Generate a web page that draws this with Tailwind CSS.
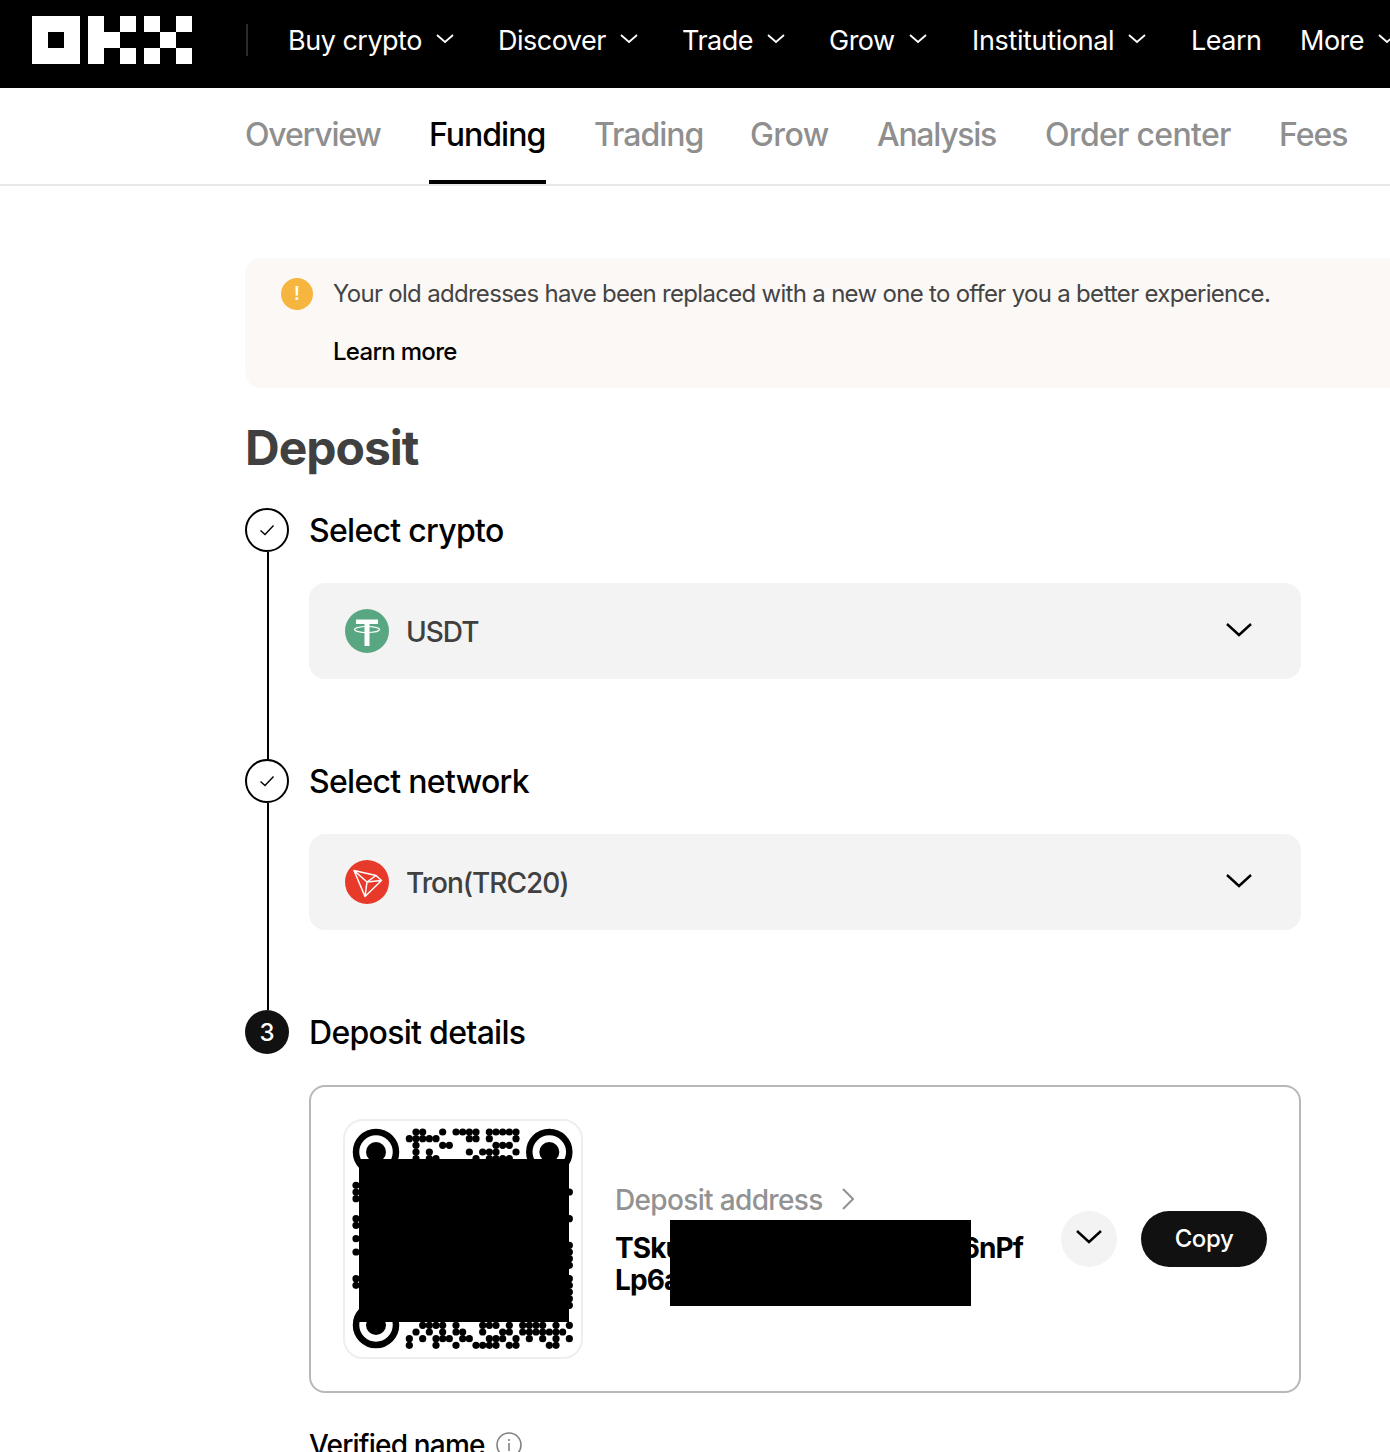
<!DOCTYPE html>
<html lang="en">

<head>
    <meta charset="UTF-8">
    <meta name="viewport" content="width=device-width, initial-scale=1.0">
    <title>Deposit</title>
    <script src="https://cdn.jsdelivr.net/npm/@tailwindcss/browser@4"></script>
</head>

<body class="bg-white font-['Inter',sans-serif] text-black">
    <div class="w-[1390px] h-[1452px] overflow-hidden relative">
        <!-- top nav -->
        <header class="h-[88px] bg-black flex items-center pl-8 pb-2 text-white text-[27px] tracking-[-0.5px] whitespace-nowrap">
            <svg class="w-[160px] h-12 shrink-0" viewBox="0 0 160 48" fill="#fff">
                <path fill-rule="evenodd" d="M0 0h48v48H0zM16 16v16h16V16z" />
                <path d="M56 0h16v48H56zM72 16h16v16H72zM88 0h16v16H88zM88 32h16v16H88z" />
                <path d="M112 0h16v16h-16zM144 0h16v16h-16zM128 16h16v16h-16zM112 32h16v16h-16zM144 32h16v16h-16z" />
            </svg>
            <div class="w-0.5 h-8 bg-[#2b2b2b] ml-[54px] mr-10 shrink-0"></div>
            <nav class="flex items-center translate-y-px">
                <a class="flex items-center gap-[14px] w-[210px]">Buy crypto
                    <svg class="w-[18px] h-[10px] -translate-y-0.5" viewBox="0 0 18 10" fill="none" stroke="#fff" stroke-width="1.8"><path d="M1 1l8 7 8-7" /></svg>
                </a>
                <a class="flex items-center gap-[14px] w-[184px]">Discover
                    <svg class="w-[18px] h-[10px] -translate-y-0.5" viewBox="0 0 18 10" fill="none" stroke="#fff" stroke-width="1.8"><path d="M1 1l8 7 8-7" /></svg>
                </a>
                <a class="flex items-center gap-[14px] w-[147px]">Trade
                    <svg class="w-[18px] h-[10px] -translate-y-0.5" viewBox="0 0 18 10" fill="none" stroke="#fff" stroke-width="1.8"><path d="M1 1l8 7 8-7" /></svg>
                </a>
                <a class="flex items-center gap-[14px] w-[143px]">Grow
                    <svg class="w-[18px] h-[10px] -translate-y-0.5" viewBox="0 0 18 10" fill="none" stroke="#fff" stroke-width="1.8"><path d="M1 1l8 7 8-7" /></svg>
                </a>
                <a class="flex items-center gap-[14px] w-[219px] tracking-[-0.35px]">Institutional
                    <svg class="w-[18px] h-[10px] -translate-y-0.5" viewBox="0 0 18 10" fill="none" stroke="#fff" stroke-width="1.8"><path d="M1 1l8 7 8-7" /></svg>
                </a>
                <a class="w-[109px]">Learn</a>
                <a class="flex items-center gap-[14px]">More
                    <svg class="w-[18px] h-[10px] -translate-y-0.5" viewBox="0 0 18 10" fill="none" stroke="#fff" stroke-width="1.8"><path d="M1 1l8 7 8-7" /></svg>
                </a>
            </nav>
        </header>

        <!-- tabs -->
        <div class="h-[98px] border-b-2 border-[#e8e8e8] pl-[245px] flex gap-12 text-[32px] tracking-[-1px] font-medium text-[#8f8f8f] whitespace-nowrap">
            <a class="w-[136px] h-[96px] leading-[94px] tracking-[-1.2px]">Overview</a>
            <a class="w-[117px] h-[96px] leading-[94px] text-black border-b-4 border-black">Funding</a>
            <a class="w-[108px] h-[96px] leading-[94px]">Trading</a>
            <a class="w-[79px] h-[96px] leading-[94px] tracking-[-0.6px]">Grow</a>
            <a class="w-[120px] h-[96px] leading-[94px] tracking-[-1.3px]">Analysis</a>
            <a class="w-[186px] h-[96px] leading-[94px] tracking-[-0.7px]">Order center</a>
            <a class="h-[96px] leading-[94px]">Fees</a>
        </div>

        <main class="pl-[245px]">
            <!-- notice -->
            <div class="mt-[72px] w-[1200px] h-[130px] bg-[#fcf8f5] rounded-2xl flex pl-9 pt-5">
                <div class="w-8 h-8 rounded-full bg-[#f5b53f] flex items-center justify-center shrink-0 text-white text-lg font-semibold">!</div>
                <div class="ml-5 text-[24px] tracking-[-0.7px] whitespace-nowrap">
                    <p class="text-[#444] leading-8">Your old addresses have been replaced with a new one to offer you a better experience.</p>
                    <p class="mt-[26px] leading-8 font-medium">Learn more</p>
                </div>
            </div>

            <h1 class="mt-[30px] text-[48px] leading-[60px] font-bold text-[#404040] tracking-[-1px]">Deposit</h1>

            <!-- steps -->
            <div class="mt-[30px] w-[1056px]">
                <section class="flex gap-5 h-[251px]">
                    <div class="w-11 flex flex-col items-center shrink-0">
                        <div class="w-11 h-11 rounded-full border-2 border-black flex items-center justify-center shrink-0">
                            <svg class="w-4 h-4" viewBox="0 0 16 16" fill="none" stroke="#000" stroke-width="1.4"><path d="M1.5 8.5l4.5 4L14.5 3.5" /></svg>
                        </div>
                        <div class="w-0.5 flex-1 bg-black translate-x-px"></div>
                    </div>
                    <div class="flex-1">
                        <h2 class="h-11 leading-[46px] text-[32px] font-medium tracking-[-0.7px]">Select crypto</h2>
                        <div class="mt-[31px] h-24 bg-[#f3f3f3] rounded-2xl flex items-center pl-9 pr-12">
                            <svg class="w-11 h-11 shrink-0" viewBox="0 0 44 44">
                                <circle cx="22" cy="22" r="22" fill="#59a782" />
                                <path d="M11 11.5h22v4.500h-8.500v22h-5v-22H11z" transform="translate(0 -1)" fill="#fff" />
                                <ellipse cx="22" cy="20.500" rx="12.500" ry="3" fill="none" stroke="#fff" stroke-width="1.200" />
                            </svg>
                            <span class="ml-[17px] pt-0.5 text-[28px] tracking-[-1px] font-medium text-[#404040]">USDT</span>
                            <svg class="ml-auto w-7 h-4 -translate-y-px" viewBox="0 0 28 16" fill="none" stroke="#000" stroke-width="2.400"><path d="M2 2l12 11L26 2" /></svg>
                        </div>
                    </div>
                </section>

                <section class="flex gap-5 h-[251px]">
                    <div class="w-11 flex flex-col items-center shrink-0">
                        <div class="w-11 h-11 rounded-full border-2 border-black flex items-center justify-center shrink-0">
                            <svg class="w-4 h-4" viewBox="0 0 16 16" fill="none" stroke="#000" stroke-width="1.4"><path d="M1.5 8.5l4.5 4L14.5 3.5" /></svg>
                        </div>
                        <div class="w-0.5 flex-1 bg-black translate-x-px"></div>
                    </div>
                    <div class="flex-1">
                        <h2 class="h-11 leading-[46px] text-[32px] font-medium tracking-[-0.7px]">Select network</h2>
                        <div class="mt-[31px] h-24 bg-[#f3f3f3] rounded-2xl flex items-center pl-9 pr-12">
                            <svg class="w-11 h-11 shrink-0" viewBox="0 0 44 44">
                                <circle cx="22" cy="22" r="22" fill="#e83a2b" />
                                <path d="M9 10.500L31 15.500L36.500 20.500L20 36.500ZM9 10.500L22 22L20 36.500M22 22L36.500 20.500M22 22L31 15.500" fill="none" stroke="#fff" stroke-width="1.500" stroke-linejoin="round" />
                            </svg>
                            <span class="ml-[17px] pt-0.5 text-[28px] tracking-[-1px] font-medium text-[#404040]">Tron(TRC20)</span>
                            <svg class="ml-auto w-7 h-4 -translate-y-px" viewBox="0 0 28 16" fill="none" stroke="#000" stroke-width="2.400"><path d="M2 2l12 11L26 2" /></svg>
                        </div>
                    </div>
                </section>

                <section class="flex gap-5">
                    <div class="w-11 shrink-0">
                        <div class="w-11 h-11 rounded-full bg-[#111] text-white flex items-center justify-center text-2xl font-medium pt-px">3</div>
                    </div>
                    <div class="flex-1">
                        <h2 class="h-11 leading-[46px] text-[32px] font-medium tracking-[-0.7px]">Deposit details</h2>
                        <div class="mt-[31px] h-[308px] border-2 border-[#b8b8b8] rounded-2xl p-8 flex">
                            <div class="w-60 h-60 border-2 border-[#eeeeee] rounded-[20px] shrink-0">
                                <svg id="qr" class="block -m-0.5 w-60 h-60" viewBox="343 1119 240 240"></svg>
                            </div>
                            <div class="ml-8 mt-[63px] flex-1">
                                <div class="flex items-center h-9 text-[28px] tracking-[-0.65px] font-medium text-[#929292]">Deposit address
                                    <svg class="ml-[19px] w-[12px] h-[22px] -translate-y-px" viewBox="0 0 12 22" fill="none" stroke="#929292" stroke-width="2"><path d="M1 1l10 10L1 21" /></svg>
                                </div>
                                <div class="mt-[14px] w-[408px] text-[28px] leading-8 font-bold tracking-[-0.9px]">
                                    <div class="flex justify-between"><span>TSku</span><span>6nPf</span></div>
                                    <div>Lp6a</div>
                                </div>
                            </div>
                            <div class="mt-[92px] flex gap-6 h-14 shrink-0">
                                <button class="w-14 h-14 rounded-full bg-[#f3f3f3] flex items-center justify-center">
                                    <svg class="w-7 h-4 -translate-y-0.5" viewBox="0 0 28 16" fill="none" stroke="#000" stroke-width="2.400"><path d="M2 2l12 11L26 2" /></svg>
                                </button>
                                <button class="w-[126px] h-14 rounded-full bg-[#111] text-white text-2xl font-medium tracking-[-0.4px]">Copy</button>
                            </div>
                        </div>
                        <div class="mt-[36px] flex items-center text-[28px] font-medium tracking-[-0.8px] leading-8 whitespace-nowrap">Verified name
                            <svg class="ml-[11px] w-[26px] h-[26px]" viewBox="0 0 26 26" fill="none" stroke="#808080" stroke-width="1.600"><circle cx="13" cy="13" r="12" /><path d="M13 11v8M13 7v2" /></svg>
                        </div>
                    </div>
                </section>
            </div>
        </main>

        <!-- masked address -->
        <div class="absolute left-[670px] top-[1220px] w-[301px] h-[86px] bg-black"></div>
    </div>

    <script>
        // qr modules visible around the masked area
        const rows = {
            0: [9, 10, 13, 15, 16, 17, 18, 20, 21, 22, 23, 24],
            1: [8, 9, 10, 11, 12, 17, 18, 20, 24],
            2: [9, 13, 14, 21, 22, 23],
            3: [9, 11, 17, 19, 20, 21, 24],
            4: [9, 11, 12, 18, 20, 21, 22, 23],
            8: [0], 9: [0, 32], 10: [0], 13: [0, 32], 14: [0], 16: [0], 17: [32], 18: [0, 32], 19: [32], 20: [32],
            22: [0, 32], 23: [0, 32], 24: [32], 25: [32], 26: [32],
            29: [10, 11, 12, 13, 15, 19, 20, 21, 23, 25, 26, 27, 28, 30, 32],
            30: [9, 11, 13, 15, 16, 19, 22, 23, 25, 26, 27, 28, 29, 30, 31],
            31: [8, 10, 12, 13, 14, 16, 17, 20, 21, 22, 24, 26, 28, 30, 32],
            32: [8, 12, 15, 18, 19, 20, 21, 23, 24, 29, 30]
        };
        let svg = '';
        for (const r in rows) {
            rows[r].forEach(c => {
                svg += `<circle cx="${356 + c * 6.667}" cy="${1132 + r * 6.667}" r="3.6"/>`;
            });
        }
        [[376, 1152], [549.3, 1152], [376, 1325]].forEach(([x, y]) => {
            svg += `<circle cx="${x}" cy="${y}" r="20" fill="none" stroke="#000" stroke-width="6.500"/><circle cx="${x}" cy="${y}" r="10"/>`;
        });
        svg += '<rect x="359" y="1159" width="210" height="163"/>';
        document.getElementById('qr').innerHTML = svg;
    </script>
</body>

</html>
